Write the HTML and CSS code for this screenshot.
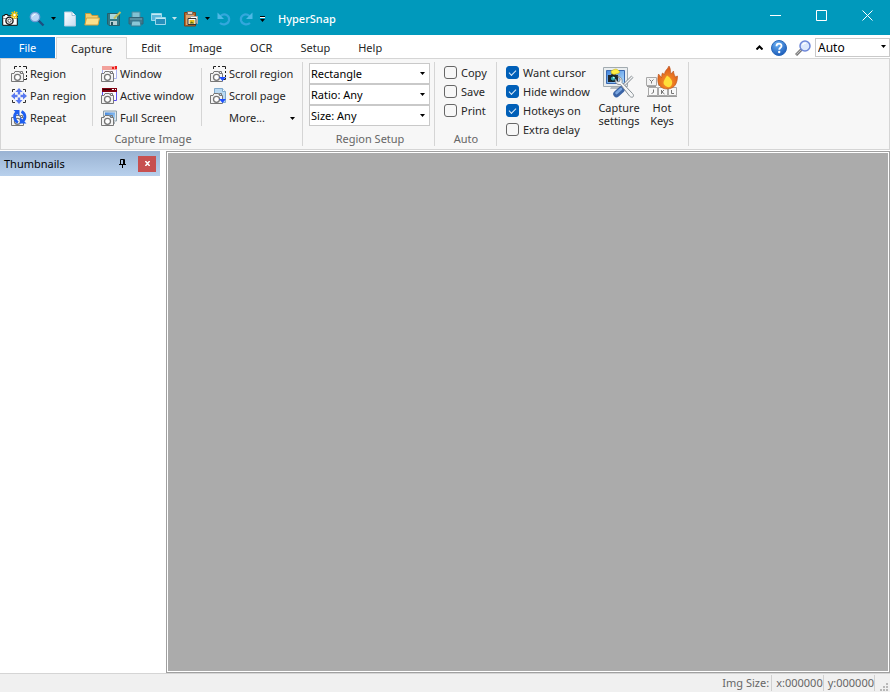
FILE: index.html
```html
<!DOCTYPE html>
<html lang="en">
<head>
<meta charset="utf-8">
<title>HyperSnap</title>
<link rel="stylesheet" href="styles.css">
</head>
<body>
<svg class="sprite" aria-hidden="true">
  <defs>
    <linearGradient id="gPage" x1="0" y1="0" x2="1" y2="1"><stop offset="0" stop-color="#ffffff"/><stop offset="1" stop-color="#c4dcf2"/></linearGradient>
    <linearGradient id="gScreen" x1="0" y1="0" x2="1" y2="1"><stop offset="0" stop-color="#3f83dc"/><stop offset="1" stop-color="#b4e0ff"/></linearGradient>
    <radialGradient id="gHelp" cx=".4" cy=".25" r=".8"><stop offset="0" stop-color="#6cb2f3"/><stop offset="1" stop-color="#1858b8"/></radialGradient>
    <radialGradient id="gFire" cx=".5" cy=".7" r=".7"><stop offset="0" stop-color="#f99a28"/><stop offset="1" stop-color="#d9531a"/></radialGradient>
  </defs>
  <symbol id="cam" viewBox="0 0 16 16">
    <path d="M.5 7.500h2.500l1-2h4.500l1 2h3v8H.5z" fill="#f4f4f4" stroke="#777"/>
    <path d="M9.500 7V5.500h2V7" fill="none" stroke="#777"/>
    <circle cx="6.500" cy="11.300" r="3" fill="#fff" stroke="#777" stroke-width="1.300"/>
  </symbol>
  <symbol id="region" viewBox="0 0 16 16">
    <path d="M3.500 3V.5H6M8 .5h2M12 .5h3.500V3M15.500 5v2M15.500 9v2M15.500 12v1.500H13" fill="none" stroke="#222"/>
    <use href="#cam"/>
  </symbol>
  <symbol id="pan" viewBox="0 0 16 16">
    <path d="M1.500 4V1.500H4M12 1.500h2.500V4M14.500 12v2.500H12M4 14.500H1.500V12" fill="none" stroke="#333"/>
    <path d="M8 0l3.500 4H9.200v2.500H6.800V4H4.500zM8 16l3.500-4H9.200V9.500H6.800V12H4.500zM0 8l4-3.500v2.300h2.500v2.400H4v2.300zM16 8l-4-3.500v2.300H9.500v2.400H12v2.300z" fill="#5878f0"/>
  </symbol>
  <symbol id="repeat" viewBox="0 0 16 16">
    <use href="#cam"/>
    <path d="M7 12.500C3 10.500 2.500 5 5.500 2.500M10.500 1.500c4 2 4.500 7 1.500 9.500" fill="none" stroke="#1f5ff0" stroke-width="2.800"/>
    <path d="M2.500 0h6v6.500zM15.500 13.500H9V7z" fill="#1f5ff0"/>
  </symbol>
  <symbol id="window" viewBox="0 0 16 16">
    <path d="M1.500 1.500h14v11h-14z" fill="#fafaff" stroke="#aab2ee"/>
    <path d="M1 0h15v4H1z" fill="#f2a19b"/><path d="M11 1h2v2h-2zM14 0h2v3h-2z" fill="#ee1c1c"/>
    <use href="#cam"/>
  </symbol>
  <symbol id="active" viewBox="0 0 16 16">
    <path d="M1.500 1.500h14v11h-14z" fill="#fafaff" stroke="#5a4cf0"/>
    <path d="M1 0h15v4H1z" fill="#800010"/><path d="M2 1.500h8" stroke="#300"/><path d="M11 1h2v1h-2zM14 1h1v1h-1z" fill="#fff"/>
    <use href="#cam"/>
  </symbol>
  <symbol id="screen" viewBox="0 0 16 16">
    <path d="M2.500 1h13v10h-13z" fill="#dfe6ea" stroke="#8da0ac"/><path d="M4 2.500h10v7H4z" fill="url(#gScreen)"/>
    <path d="M9 12h5v2H9z" fill="#a7b3bb"/>
    <use href="#cam"/>
  </symbol>
  <symbol id="scrollregion" viewBox="0 0 16 16">
    <use href="#region"/><path d="M9 11h7l-3.500 4z" fill="#1f4fff"/>
  </symbol>
  <symbol id="scrollpage" viewBox="0 0 16 16">
    <path d="M4.500.5h8l3 3v11h-11z" fill="#b9d9f2" stroke="#7fa9cc"/><path d="M12.500.5v3h3" fill="#fff" stroke="#7fa9cc"/>
    <use href="#cam"/><path d="M9 11h7l-3.500 4z" fill="#1f4fff"/>
  </symbol>
  <symbol id="app" viewBox="0 0 16 16">
    <path d="M.7 4.700h2V3.500h3v1.200h9.600v9.600H.7z" fill="#fff" stroke="#111"/>
    <path d="M1 7.500h14" stroke="#999"/>
    <circle cx="7.500" cy="9.700" r="3.600" fill="#eee" stroke="#111" stroke-width="1.300"/><circle cx="7.500" cy="9.700" r="1.600" fill="#fff" stroke="#555"/>
    <path d="M12.500 0v8M8.700 4h7.300M9.700 1l5.600 6M15.300 1l-5.600 6" stroke="#f4c60c" stroke-width="1.400"/><circle cx="12.500" cy="4" r="1.200" fill="#fff"/>
  </symbol>
  <symbol id="zoomq" viewBox="0 0 16 16">
    <path d="M9.500 9.500l5 5" stroke="#1c4f80" stroke-width="2.400"/><circle cx="6" cy="6" r="4.700" fill="#b9d6f6" stroke="#6e9bd4" stroke-width="1.300"/><path d="M3.500 5.500Q4 3.500 6.500 3.200" stroke="#fff" fill="none"/>
  </symbol>
  <symbol id="new" viewBox="0 0 16 16"><path d="M2.500 1h7.500l3.500 3.500V15h-11z" fill="url(#gPage)" stroke="#b5cce0"/><path d="M10 1v3.500h3.500" fill="#fff" stroke="#9dbcd6"/></symbol>
  <symbol id="open" viewBox="0 0 16 16"><path d="M1.500 13V2.500h5l1.500 2h6V13z" fill="#f0cd72" stroke="#c59a3c"/><path d="M2.500 7h13l-1.500 7H.8z" fill="#fbe08c" stroke="#d0a040"/></symbol>
  <symbol id="save" viewBox="0 0 16 16"><path d="M1.500 2.500h12v12H3l-1.500-1.500z" fill="#327986" stroke="#26606c"/><path d="M4 3h7v5H4z" fill="#a9d6dc"/><path d="M4 10h7v4H4z" fill="#b7d0d3"/><path d="M5 11h2v3H5z" fill="#245560"/><path d="M8 7.500L14.500 1" stroke="#c3bd5c" stroke-width="2"/></symbol>
  <symbol id="print" viewBox="0 0 16 16"><path d="M4 1h8v6H4z" fill="#82c2d3" stroke="#478ba0"/><path d="M1 6.500h14V13H1z" fill="#41788c" stroke="#316477"/><path d="M4 10h8l1 5H3z" fill="#8bc7d6" stroke="#397a90"/><path d="M2 8h12" stroke="#70a7b6"/></symbol>
  <symbol id="windows" viewBox="0 0 16 16"><path d="M1.500 2.500h10v7h-10z" fill="#5bb7dc" stroke="#9bd8ea"/><path d="M2 3.500h9" stroke="#c3e9f3"/><path d="M5.500 6.500h10v7h-10z" fill="#268fbb" stroke="#9bd8ea"/><path d="M6 7.500h9" stroke="#c3e9f3"/></symbol>
  <symbol id="paste" viewBox="0 0 16 16"><path d="M1.500 1.500h11v13.500h-11z" fill="#b56a30" stroke="#7b431b"/><path d="M4.500.5h5v3h-5z" fill="#d7d2c9" stroke="#77716a"/><path d="M3 4h8v10H3z" fill="#dca571"/><path d="M7.500 5.500h7v7h-7z" fill="#fff" stroke="#aaa"/><path d="M5 7.500h8v6H5z" fill="#fff" stroke="#333"/><path d="M6.500 9h5v3.500h-5z" fill="#e9bf1b"/><path d="M6.500 12.500l2-2 3 2z" fill="#567017"/></symbol>
  <symbol id="undo" viewBox="0 0 16 16"><path d="M4.500 5c4.500-4 9.500 0 8.500 4.500-1 4-6 5-9 2.500" fill="none" stroke="#33a7dd" stroke-width="2.200"/><path d="M1.500 1.500v6.500H8z" fill="#4db9e6"/></symbol>
  <symbol id="redo" viewBox="0 0 16 16"><path d="M11.500 5C7 1 2 5 3 9.500c1 4 6 5 9 2.500" fill="none" stroke="#33a7dd" stroke-width="2.200"/><path d="M14.500 1.500v6.500H8z" fill="#4db9e6"/></symbol>
  <symbol id="down" viewBox="0 0 5 3"><path d="M0 0h5L2.500 3z" fill="currentColor"/></symbol>
  <symbol id="help" viewBox="0 0 16 16"><circle cx="8" cy="8" r="7.500" fill="url(#gHelp)" stroke="#2a69ba"/><path d="M5.500 6.200C5.500 2.800 10.600 3 10.500 6c0 1.700-2.300 1.900-2.300 3.800" fill="none" stroke="#fff" stroke-width="1.800"/><circle cx="8.200" cy="12" r="1.200" fill="#fff"/></symbol>
  <symbol id="find" viewBox="0 0 16 16"><path d="M1 15l5.500-5.500" stroke="#777" stroke-width="3"/><path d="M1.300 14.500l4.500-4.500" stroke="#ccc"/><circle cx="10" cy="6" r="5" fill="#dde8fc" stroke="#6c86d8" stroke-width="1.500"/><path d="M7.500 5Q8.500 3 11 3.200" fill="none" stroke="#fff" stroke-width="1.300"/></symbol>
  <symbol id="settings" viewBox="0 0 32 32">
    <path d="M.5 1.500h24v19H.5z" fill="#e9edef" stroke="#a2abb0"/><path d="M3.500 4.500h18v13h-18z" fill="url(#gScreen)" stroke="#3a68b0"/>
    <path d="M8 21h8l1 2H7z" fill="#b7bec2"/>
    <path d="M5 9h3l1-2h3l1 2h2v7H5z" fill="#22282b"/><circle cx="10" cy="12.500" r="2.600" fill="#33a5a8" stroke="#051b20"/><circle cx="10.800" cy="11.600" r=".9" fill="#b9ffff"/>
    <path d="M8 5l3-1.500 2-.5 2 1 2 2-2 1.500-4 1-2.500-1z" fill="#fff044" stroke="#c7b61a" stroke-width=".6"/>
    <path d="M19 21L29.500 10.500" stroke="#8e969b" stroke-width="3"/><path d="M19 21L29.500 10.500" stroke="#f4f4f4" stroke-width="1.200"/>
    <path d="M13.500 28l5-4.500" stroke="#3b64a6" stroke-width="6.500" stroke-linecap="round"/><path d="M13.500 27l4.500-4" stroke="#7ba6e0" stroke-width="2.600" stroke-linecap="round"/>
    <path d="M12.500 13c-1 3 1 6 5 5.500L26.500 30c3 3 5.500 0 3-2.500L19 16.500c.7-3-1-6-4-5.800l2.200 2.300-.7 2.500-2.200.3z" fill="#f5f6f7" stroke="#878f94"/>
  </symbol>
  <symbol id="hotkeys" viewBox="0 0 32 32">
    <path d="M1 19.500h9v1.500H1zM1 29.500h30v1.500H1z" fill="#9a9a9a"/>
    <path d="M.5 11.500h10v8H.5zM12.500 11.500h10v8h-10z" fill="#f3f3f3" stroke="#a8a8a8"/><path d="M2.500 21.500h9v8h-9zM12.500 21.500h9v8h-9zM22.500 21.500h8v8h-8z" fill="#f8f8f8" stroke="#a8a8a8"/>
    <path d="M3.500 13.500l2 2 2-2M5.500 15.500v2M7.500 23.500v3l-2 1M15.500 24v4M18 24l-2 2 2.500 2M25.500 24v3.500h2.500" fill="none" stroke="#777"/>
    <path d="M15 21c-4-3-3.500-8-2.500-13l3 3.500c.5-2 0-3 1-4.500l2 1.500c0-4 3-5 4.500-8.500 2 3 1 5 2 8l2.500-3c0 3 1.500 4 1.500 6l2.500-1c0 6-2 11-7 12.500-4 1-7 .5-9.500-1.500z" fill="url(#gFire)" stroke="#b5531a" stroke-width=".6"/>
    <path d="M19.500 20c-4-3-1-6 1.500-10.500 4 2.500 6 6 5 8.500-1 3.500-4 4-6.500 2z" fill="#ffdf3a"/>
  </symbol>
</svg>

<header class="titlebar">
  <div class="quick">
    <svg class="ico"><use href="#app"/></svg>
    <button aria-label="Zoom"><svg class="ico"><use href="#zoomq"/></svg></button>
    <button class="drop" aria-label="Zoom options"><svg class="arrow"><use href="#down"/></svg></button>
    <button aria-label="New"><svg class="ico"><use href="#new"/></svg></button>
    <button aria-label="Open"><svg class="ico"><use href="#open"/></svg></button>
    <button aria-label="Save"><svg class="ico"><use href="#save"/></svg></button>
    <button aria-label="Print"><svg class="ico"><use href="#print"/></svg></button>
    <button aria-label="Copy"><svg class="ico"><use href="#windows"/></svg></button>
    <button class="drop faded" aria-label="Copy options"><svg class="arrow"><use href="#down"/></svg></button>
    <button aria-label="Paste"><svg class="ico"><use href="#paste"/></svg></button>
    <button class="drop" aria-label="Paste options"><svg class="arrow"><use href="#down"/></svg></button>
    <button aria-label="Undo"><svg class="ico"><use href="#undo"/></svg></button>
    <button aria-label="Redo"><svg class="ico"><use href="#redo"/></svg></button>
    <button class="drop" aria-label="Customize toolbar"><svg class="custom" viewBox="0 0 5 6"><path d="M0 .5h5" stroke="#000"/><path d="M0 1.500h5" stroke="#fff"/><path d="M0 3h5L2.500 6z" fill="#000"/></svg></button>
  </div>
  <div class="title">HyperSnap</div>
  <div class="sys">
    <button aria-label="Minimize"><svg viewBox="0 0 11 11"><path d="M0 5.500h11"/></svg></button>
    <button aria-label="Maximize"><svg viewBox="0 0 11 11"><path d="M.5.5h10v10H.5z"/></svg></button>
    <button aria-label="Close"><svg viewBox="0 0 11 11"><path d="M.5.5l10 10M10.500.5l-10 10"/></svg></button>
  </div>
</header>

<nav class="tabs">
  <button class="tab file">File</button>
  <button class="tab current">Capture</button>
  <button class="tab">Edit</button>
  <button class="tab">Image</button>
  <button class="tab">OCR</button>
  <button class="tab">Setup</button>
  <button class="tab">Help</button>
  <div class="tools">
    <button aria-label="Collapse ribbon"><svg class="caret" viewBox="0 0 7 5"><path d="M.5 4.500l3-3 3 3" fill="none" stroke="#000" stroke-width="2"/></svg></button>
    <button aria-label="Help topics"><svg class="ico"><use href="#help"/></svg></button>
    <button aria-label="Find"><svg class="ico"><use href="#find"/></svg></button>
    <span class="combo zoom"><select aria-label="Zoom level"><option>Auto</option></select><svg class="arrow"><use href="#down"/></svg></span>
  </div>
</nav>

<section class="ribbon">
  <div class="group">
    <div class="body commands">
      <div class="col">
        <button><svg class="ico"><use href="#region"/></svg>Region</button>
        <button><svg class="ico"><use href="#pan"/></svg>Pan region</button>
        <button><svg class="ico"><use href="#repeat"/></svg>Repeat</button>
      </div>
      <div class="col">
        <button><svg class="ico"><use href="#window"/></svg>Window</button>
        <button><svg class="ico"><use href="#active"/></svg>Active window</button>
        <button><svg class="ico"><use href="#screen"/></svg>Full Screen</button>
      </div>
      <div class="col">
        <button><svg class="ico"><use href="#scrollregion"/></svg>Scroll region</button>
        <button><svg class="ico"><use href="#scrollpage"/></svg>Scroll page</button>
        <button class="more-cmd"><span>More...</span><svg class="arrow"><use href="#down"/></svg></button>
      </div>
    </div>
    <h2>Capture Image</h2>
  </div>
  <div class="group">
    <div class="body combos">
      <span class="combo"><select aria-label="Region shape"><option>Rectangle</option></select><svg class="arrow"><use href="#down"/></svg></span>
      <span class="combo"><select aria-label="Ratio"><option>Ratio: Any</option></select><svg class="arrow"><use href="#down"/></svg></span>
      <span class="combo"><select aria-label="Size"><option>Size: Any</option></select><svg class="arrow"><use href="#down"/></svg></span>
    </div>
    <h2>Region Setup</h2>
  </div>
  <div class="group">
    <div class="body checks">
      <label><input type="checkbox">Copy</label>
      <label><input type="checkbox">Save</label>
      <label><input type="checkbox">Print</label>
    </div>
    <h2>Auto</h2>
  </div>
  <div class="group options">
    <div class="checks">
      <label><input type="checkbox" checked>Want cursor</label>
      <label><input type="checkbox" checked>Hide window</label>
      <label><input type="checkbox" checked>Hotkeys on</label>
      <label><input type="checkbox">Extra delay</label>
    </div>
    <button class="big"><svg><use href="#settings"/></svg><span>Capture</span><span>settings</span></button>
    <button class="big"><svg><use href="#hotkeys"/></svg><span>Hot</span><span>Keys</span></button>
  </div>
</section>

<main class="work">
  <aside class="thumbs">
    <div class="thumbs-head">
      <span>Thumbnails</span>
      <button aria-label="Pin"><svg class="pin" viewBox="0 0 7 9"><path d="M1.500 5V.5h4V5M0 5.500h7M3.500 6v3M4.500 1v4" fill="none" stroke="#000"/></svg></button>
      <button class="close" aria-label="Close thumbnails"><svg viewBox="0 0 5 5"><path d="M.3 0l4.400 5M4.700 0L.3 5" stroke="#fff" stroke-width="1.500"/></svg></button>
    </div>
  </aside>
  <div class="canvas"></div>
</main>

<footer class="status">
  <span class="size">Img Size:</span>
  <span>x:000000</span>
  <span>y:000000</span>
  <svg class="grip" viewBox="0 0 8 8"><path d="M6 0h2v2H6zM3 3h2v2H3zM6 3h2v2H6zM0 6h2v2H0zM3 6h2v2H3zM6 6h2v2H6z" fill="#b8b8b8"/></svg>
</footer>
</body>
</html>
```

FILE: styles.css
```css
* { box-sizing: border-box; }

body {
  margin: 0;
  height: 100vh;
  display: flex;
  flex-direction: column;
  background: #fff;
  color: #262626;
  font: 11px/14px "Noto Sans", "Open Sans", sans-serif;
}

button {
  margin: 0;
  padding: 0;
  border: 0;
  background: none;
  color: inherit;
  font: inherit;
  white-space: nowrap;
}

svg { display: block; flex: none; }
.sprite { position: absolute; width: 0; height: 0; }
.ico { width: 16px; height: 16px; }
.arrow { width: 5px; height: 3px; color: #000; }

.titlebar {
  display: flex;
  align-items: center;
  height: 35px;
  flex: none;
  background: #0099bc;
  color: #fff;
}
.quick { display: flex; align-items: center; gap: 6px; padding: 2px 0 0 2px; }
.quick .drop { width: 5px; }
.quick button:nth-child(2) { margin-left: 5px; }
.quick .faded .arrow { color: #c5e3ea; }
.custom { width: 5px; height: 6px; }
.title { margin-left: 13px; padding-top: 3px; font-weight: 500; }
.sys { display: flex; margin-left: auto; padding-bottom: 5px; }
.sys button { width: 46px; height: 30px; display: grid; place-items: center; }
.sys svg { width: 11px; height: 11px; fill: none; stroke: #fff; }

.tabs { display: flex; height: 23px; flex: none; padding-top: 2px; }
.tab { padding: 0 14px; height: 21px; }
.file { width: 55px; margin-right: 1px; background: #0078d7; color: #fff; }
.current {
  position: relative;
  height: 22px;
  border: 1px solid #d5d5d5;
  border-bottom: 0;
  background: #f7f7f7;
}
.tools { display: flex; align-items: center; gap: 8px; margin-left: auto; }
.tools .caret { width: 7px; height: 5px; }

.combo { position: relative; display: block; }
.combo select {
  appearance: none;
  display: block;
  width: 100%;
  height: 21px;
  margin: 0;
  padding: 0 1px;
  border: 1px solid #c9c9c9;
  border-radius: 0;
  background: #fff;
  color: #000;
  font: inherit;
}
.combo .arrow { position: absolute; right: 5px; top: 9px; pointer-events: none; }
.zoom { width: 75px; margin-left: -4px; font-size: 12px; }
.zoom .arrow { right: 4px; top: 7px; }
.zoom select { height: 19px; padding: 0 2px; }

.ribbon {
  display: flex;
  flex: none;
  height: 92px;
  border: 1px solid #d5d5d5;
  background: #f7f7f7;
}
.group {
  position: relative;
  display: flex;
  flex-direction: column;
  padding: 4px 4px 0 6px;
}
.group::after {
  content: "";
  position: absolute;
  right: 0;
  top: 3px;
  bottom: 3px;
  width: 1px;
  background: #d5d5d5;
}
.group h2 { margin: 0; font: inherit; text-align: center; color: #666; }
.body { height: 69px; }

.commands { display: flex; align-items: flex-start; }
.col { width: 109px; border-right: 1px solid #d5d5d5; margin-top: 5px; height: 58px; padding-left: 8px; }
.col:first-child { width: 86px; padding-left: 4px; }
.col:last-child { width: 97px; border: 0; }
.col button { display: flex; align-items: center; gap: 3px; height: 22px; }
.col button:first-child { margin-top: -5px; }
.col .more-cmd { width: 85px; padding-left: 19px; justify-content: space-between; }

.combos { width: 121px; }
.group:nth-child(2) { width: 132px; }

.checks { display: flex; flex-direction: column; }
.checks label { display: flex; align-items: center; gap: 4px; height: 19px; white-space: nowrap; }
.checks input {
  appearance: none;
  flex: none;
  width: 13px;
  height: 13px;
  margin: 0;
  border: 1px solid #666;
  border-radius: 3px;
  background: #f7f7f7;
}
.checks input:checked { border-color: #005fb8; background: #005fb8; display: grid; place-items: center; }
.checks input:checked::before {
  content: "";
  width: 6px;
  height: 3px;
  margin-bottom: 2px;
  border: solid #dcebf8;
  border-width: 0 0 1px 1px;
  transform: rotate(-45deg);
}
.group:nth-child(3) { width: 62px; padding-left: 9px; }
.group:nth-child(3) h2 { padding-right: 5px; }
.options { flex-direction: row; width: 192px; padding-left: 9px; }
.options .checks { width: 88px; }
.big { display: flex; flex-direction: column; align-items: center; width: 50px; line-height: 13px; padding-top: 3px; }
.big + .big { width: 36px; }
.big svg { width: 32px; height: 32px; margin-bottom: 3px; }

.work { display: flex; flex: 1; min-height: 0; gap: 6px; padding-top: 1px; }
.thumbs { width: 160px; flex: none; }
.thumbs-head {
  display: flex;
  align-items: center;
  height: 25px;
  padding: 0 4px;
  background: linear-gradient(#9ab3d3, #b8d0ec);
  color: #000;
}
.thumbs-head span { flex: 1; }
.pin { width: 7px; height: 9px; }
.close { width: 18px; height: 16px; margin-left: 12px; display: grid; place-items: center; background: #c75050; }
.close svg { width: 5px; height: 5px; }
.canvas { flex: 1; border: 1px solid #a0a0a0; box-shadow: inset 0 0 0 1px #fff; background: #ababab; }

.status {
  display: flex;
  align-items: center;
  justify-content: flex-end;
  height: 19px;
  flex: none;
  border-top: 1px solid #d5d5d5;
  background: #f0f0f0;
  color: #666;
}
.status span { padding: 1px 0 1px 4px; border-right: 1px solid #d0d0d0; }
.status .size { padding-right: 2px; }
.grip { width: 8px; height: 8px; margin: 8px 2px 0 5px; }
```
